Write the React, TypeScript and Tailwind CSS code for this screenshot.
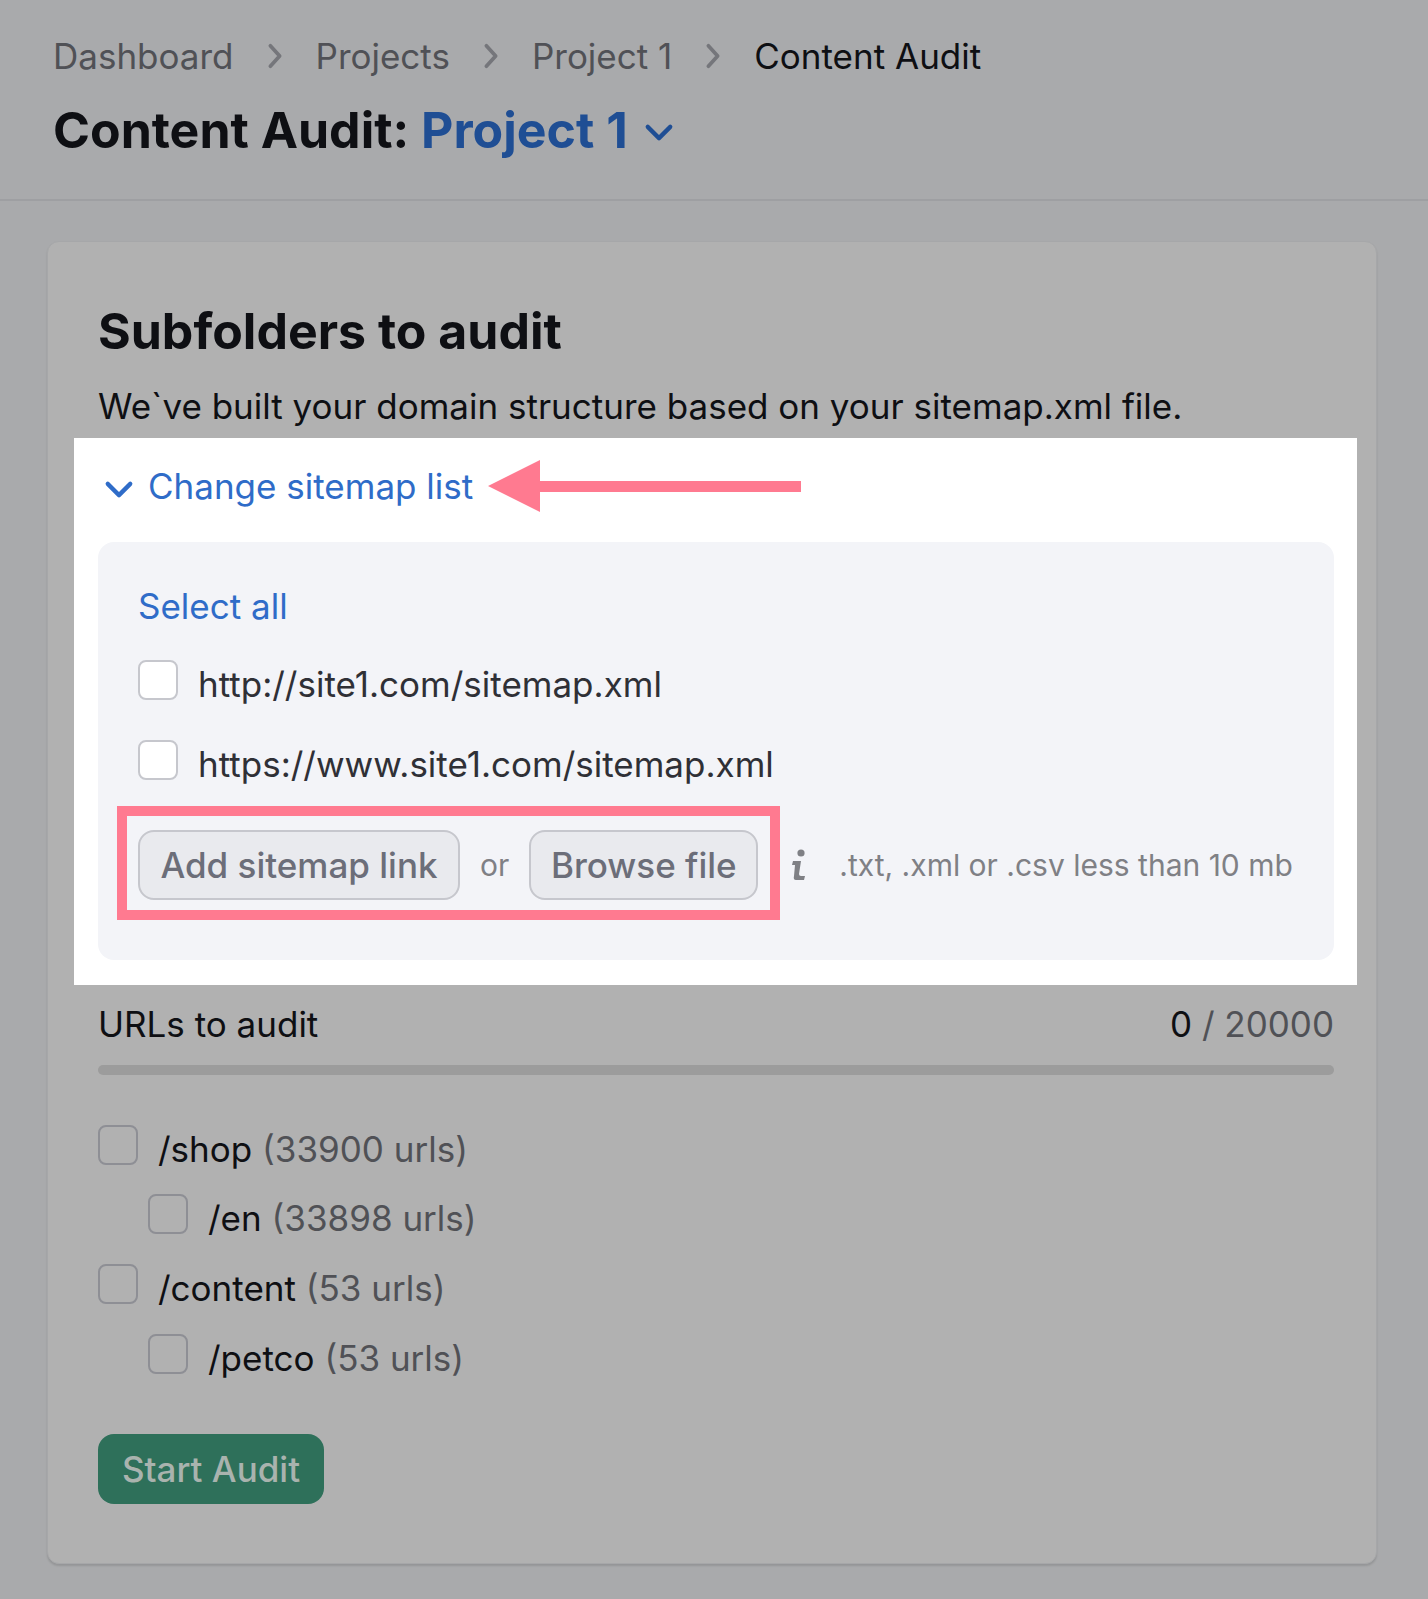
import React from "react";

const Chevron = ({ className }: { className: string }) => (
  <svg viewBox="0 0 24 15" fill="none" stroke="currentColor" strokeWidth="3.4" strokeLinecap="round" strokeLinejoin="round" className={className}>
    <path d="M3 3 L12 12 L21 3" />
  </svg>
);

const Sep = () => (
  <svg viewBox="0 0 16 28" fill="none" stroke="#75767b" strokeWidth="4" strokeLinecap="round" strokeLinejoin="round" className="mx-[33px] h-[26px] w-[16px]">
    <path d="M3 3 L13 14 L3 25" />
  </svg>
);

const Box = ({ white }: { white?: boolean }) => (
  <span
    className={
      white
        ? "block h-10 w-10 shrink-0 rounded-lg border-2 border-[#c6c7cd] bg-white"
        : "block h-10 w-10 shrink-0 rounded-lg border-2 border-[#8e8f95] bg-[#b1b1b1]"
    }
  />
);

const Folder = ({ path, count, nested, mt }: { path: string; count: string; nested?: boolean; mt: string }) => (
  <div className={`flex items-start gap-5 ${nested ? "ml-[50px]" : ""} ${mt}`}>
    <Box />
    <div className="h-10 whitespace-nowrap text-[35px] leading-[48px] text-[#0e0f13]">
      {path} <span className="text-[#505156]">{count}</span>
    </div>
  </div>
);

export default function App() {
  return (
    <div className="h-[1599px] w-[1428px] overflow-hidden bg-[#a9aaac] font-['Inter',sans-serif]">
      <header className="h-[201px] border-b-2 border-[#9e9fa2] pl-[53px] pt-[34px]">
        <nav className="flex h-11 items-center text-[35px] leading-[44px] text-[#505156]">
          <span>Dashboard</span>
          <Sep />
          <span>Projects</span>
          <Sep />
          <span>Project 1</span>
          <Sep />
          <span className="text-[#0e0f13]">Content Audit</span>
        </nav>
        <h1 className="mt-[23px] flex items-center text-[50px] font-bold leading-[58px] text-[#0e0f13]">
          Content Audit:&nbsp;<span className="text-[#1f4e94]">Project 1</span>
          <Chevron className="ml-[16px] mt-[4px] h-[19px] w-[30px] text-[#1f4e94]" />
        </h1>
      </header>

      <main className="ml-[47px] mt-[40px] h-[1323px] w-[1330px] rounded-xl border border-[#a6a7a9] bg-[#b1b1b1] pl-[50px] pr-[42px] pt-[60px] shadow-[0_2px_2px_rgba(0,0,0,0.12)]">
        <h2 className="text-[50px] font-bold leading-[58px] text-[#0e0f13]">Subfolders to audit</h2>
        <p className="mt-[24px] text-[35px] leading-[44px] text-[#0e0f13]">We`ve built your domain structure based on your sitemap.xml file.</p>

        <section className="relative -ml-6 mt-[10px] h-[547px] w-[1283px] bg-white">
          <div className="flex h-[104px] items-center pb-2">
            <Chevron className="ml-[30px] mt-[6px] h-[19px] w-[30px] text-[#2f6cc8]" />
            <span className="ml-[14px] text-[35px] leading-[44px] text-[#2f6cc8]">Change sitemap list</span>
          </div>
          <svg viewBox="0 0 313 52" className="absolute left-[414px] top-[22px] h-[52px] w-[313px]" fill="#ff7a90">
            <path d="M0 26 L52 0 L52 21 L313 21 L313 32 L52 32 L52 52 Z" />
          </svg>

          <div className="relative ml-6 mr-[23px] h-[418px] rounded-2xl bg-[#f3f4f8] pl-10 pt-[42px]">
            <div className="h-11 text-[35px] leading-[44px] text-[#2f6cc8]">Select all</div>
            <div className="mt-8 flex h-20 gap-5">
              <Box white />
              <span className="text-[35px] leading-[48px] text-[#2f3036]">http://site1.com/sitemap.xml</span>
            </div>
            <div className="flex h-20 gap-5">
              <Box white />
              <span className="text-[35px] leading-[48px] text-[#2f3036]">https://www.site1.com/sitemap.xml</span>
            </div>
            <div className="mt-[10px] flex h-[70px] items-center">
              <button className="h-[70px] w-[322px] rounded-2xl border-2 border-[#c6c7cd] bg-[#e9eaee] text-center text-[35px] font-medium leading-[64px] text-[#6c6e79]">Add sitemap link</button>
              <span className="ml-5 text-[30px] text-[#7f8085]">or</span>
              <button className="ml-5 h-[70px] w-[229px] rounded-2xl border-2 border-[#c6c7cd] bg-[#e9eaee] text-center text-[35px] font-medium leading-[64px] text-[#6c6e79]">Browse file</button>
              <svg viewBox="0 0 16 32" className="ml-[33px] h-[32px] w-[16px]" fill="#7f8085">
                <circle cx="10" cy="4" r="3.6" />
                <path d="M2 12 H10 L8 25 Q8 27 10 27 H14 L13 31 H5 Q2 31 3 27 L4 16 H1 Z" />
              </svg>
              <span className="ml-[32px] whitespace-nowrap text-[30px] text-[#7f8085]">.txt, .xml or .csv less than 10 mb</span>
            </div>
            <div className="pointer-events-none absolute left-[19px] top-[264px] h-[114px] w-[663px] border-[10px] border-[#ff7a90]" />
          </div>
        </section>

        <div className="mt-[17px] flex h-11 items-center justify-between text-[35px] leading-[44px]">
          <span className="text-[#0e0f13]">URLs to audit</span>
          <span className="text-[#505156]"><span className="text-[#0e0f13]">0</span> / 20000</span>
        </div>
        <div className="mt-[19px] h-[10px] rounded-full bg-[#9c9c9c]" />

        <Folder path="/shop" count="(33900 urls)" mt="mt-[50px]" />
        <Folder path="/en" count="(33898 urls)" nested mt="mt-[29px]" />
        <Folder path="/content" count="(53 urls)" mt="mt-[30px]" />
        <Folder path="/petco" count="(53 urls)" nested mt="mt-[30px]" />

        <button className="mt-[60px] h-[70px] w-[226px] rounded-2xl bg-[#2e705a] text-center text-[35px] font-medium leading-[66px] text-[#a9b3ae]">Start Audit</button>
      </main>
    </div>
  );
}
